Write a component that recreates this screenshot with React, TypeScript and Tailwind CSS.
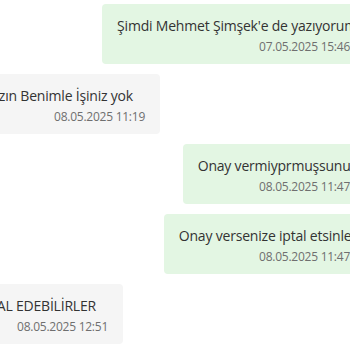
const MESSAGES = [
  { id: 1, mine: true, text: "Şimdi Mehmet Şimşek'e de yazıyorum", time: "07.05.2025 15:46" },
  { id: 2, mine: false, text: "Müdürünüze yazın Benimle İşiniz yok", time: "08.05.2025 11:19" },
  { id: 3, mine: true, text: "Onay vermiyprmuşsunuz", time: "08.05.2025 11:47" },
  { id: 4, mine: true, text: "Onay versenize iptal etsinler", time: "08.05.2025 11:47" },
  { id: 5, mine: false, text: "Onlar İPTAL EDEBİLİRLER", time: "08.05.2025 12:51" },
];

function Bubble({ mine, text, time }: { mine: boolean; text: string; time: string }) {
  return (
    <div
      className={`shrink-0 whitespace-nowrap rounded-[4px] px-[15px] pt-[11px] pb-[9px] ${
        mine ? "bg-[#e3f6e3]" : "bg-[#f5f5f5]"
      }`}
    >
      <p
        className={`text-[14px] leading-[22px] tracking-[-0.2px] text-[#333333] ${
          mine ? "" : "pr-[12px]"
        }`}
      >
        {text}
      </p>
      <p
        className={`mt-[2px] text-right text-[12px] leading-[16px] tracking-[-0.25px] text-[#6f6f6f] ${
          mine ? "mr-[7px]" : ""
        }`}
      >
        {time}
      </p>
    </div>
  );
}

export default function App() {
  return (
    <div
      className="h-[350px] w-[350px] overflow-hidden bg-white"
      style={{ fontFamily: '"Open Sans", "Noto Sans", sans-serif' }}
    >
      <div className="flex w-[372px] flex-col gap-[10px] pt-[4px]">
        {MESSAGES.map((m) =>
          m.mine ? (
            <div key={m.id} className="flex justify-end">
              <Bubble mine text={m.text} time={m.time} />
            </div>
          ) : (
            <div key={m.id} className={`flex justify-end ${m.id === 2 ? "w-[160px]" : "w-[123px]"}`}>
              <Bubble mine={false} text={m.text} time={m.time} />
            </div>
          )
        )}
      </div>
    </div>
  );
}
